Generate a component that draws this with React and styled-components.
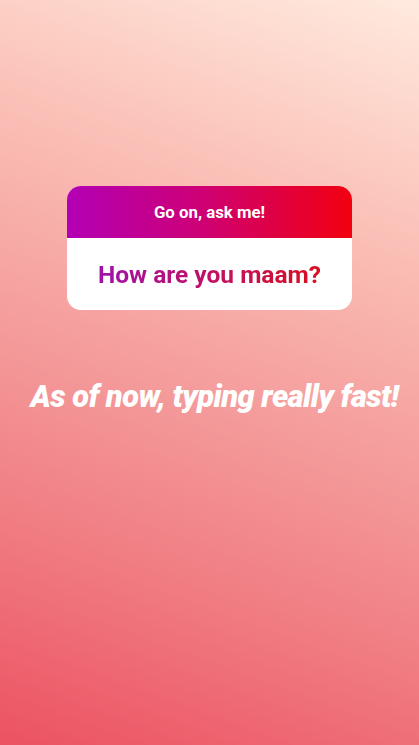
import React from 'react'
import styled, { createGlobalStyle } from 'styled-components'

const GlobalStyle = createGlobalStyle`
    html, body {
        margin: 0;
        padding: 0;
    }
    body {
        font-family: Roboto, "Liberation Sans", sans-serif;
    }
`

const Story = styled.div`
    width: 419px;
    height: 745px;
    display: flex;
    flex-direction: column;
    align-items: center;
    padding-top: 186px;
    box-sizing: border-box;
    background: linear-gradient(200deg, #ffeadf 0%, #fbc4ba 25%, #f5a09f 50%, #f07c82 75%, #ec5262 100%);
    overflow: hidden;
`

const QuestionCard = styled.div`
    width: 285px;
    border-radius: 14px;
    overflow: hidden;
    background: #fff;
`

const CardHeader = styled.div`
    height: 52px;
    display: flex;
    align-items: center;
    justify-content: center;
    background: linear-gradient(90deg, #b300b5 0%, #cc0078 45%, #f2000f 100%);
    color: #fff;
    font-size: 16.8px;
    font-weight: 700;
`

const CardBody = styled.div`
    height: 72px;
    display: flex;
    align-items: center;
    justify-content: center;
`

const Question = styled.span`
    font-size: 24.5px;
    font-weight: 700;
    background: linear-gradient(90deg, #a012a8 0%, #c4105e 55%, #d8101e 100%);
    -webkit-background-clip: text;
    background-clip: text;
    color: transparent;
`

const Caption = styled.div`
    margin-top: 68px;
    padding-left: 10px;
    color: #fff;
    font-size: 30.8px;
    font-weight: 900;
    font-style: italic;
    letter-spacing: -0.5px;
    white-space: nowrap;
`

export default function App() {
    return (
        <Story>
            <GlobalStyle />
            <QuestionCard>
                <CardHeader>Go on, ask me!</CardHeader>
                <CardBody>
                    <Question>How are you maam?</Question>
                </CardBody>
            </QuestionCard>
            <Caption>As of now, typing really fast!</Caption>
        </Story>
    )
}
